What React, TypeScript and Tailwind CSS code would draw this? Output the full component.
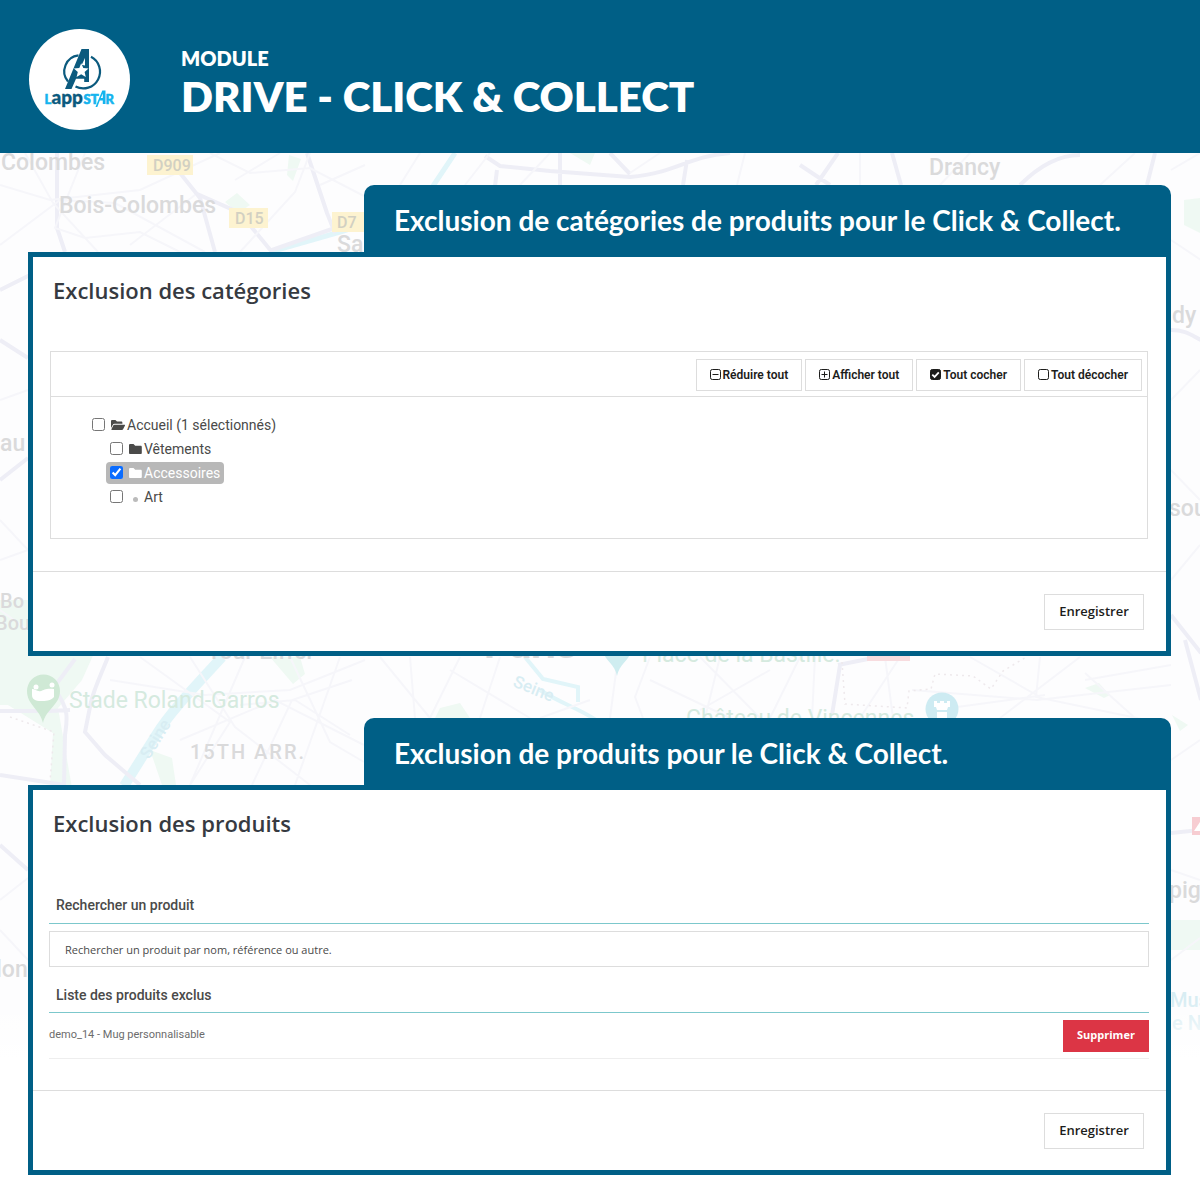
import type { ReactNode } from 'react';
import { useState } from 'react';

const toolbar = [
  { label: 'Réduire tout', icon: 'minus' },
  { label: 'Afficher tout', icon: 'plus' },
  { label: 'Tout cocher', icon: 'checked' },
  { label: 'Tout décocher', icon: 'empty' },
];

function BoxIcon({ kind }: { kind: string }) {
  return (
    <svg className="mb-0.5 size-[11px] shrink-0" viewBox="0 0 11 11" fill="none" stroke="#1d1d1b" aria-hidden="true">
      <rect x="0.5" y="0.5" width="10" height="10" rx="1.8" fill={kind === 'checked' ? '#1d1d1b' : 'none'} />
      {(kind === 'minus' || kind === 'plus') && <path d="M2.5 5.5h6" />}
      {kind === 'plus' && <path d="M5.5 2.5v6" />}
      {kind === 'checked' && <path d="M2.3 5.6l2.3 2.3 4.2-4.5" stroke="#fff" strokeWidth="1.8" />}
    </svg>
  );
}

function Folder() {
  return (
    <svg className="h-3 w-[13px] shrink-0" viewBox="0 0 13 12" fill="currentColor" aria-hidden="true">
      <path d="M0 2.2C0 1.5.6 1 1.2 1h3.3l1.7 1.7h5.4c.7 0 1.2.5 1.2 1.2v6c0 .6-.5 1.1-1.2 1.1H1.2C.6 11 0 10.5 0 9.9z" />
    </svg>
  );
}

function FolderOpen() {
  return (
    <svg className="h-3 w-[14px] shrink-0" viewBox="0 0 14 12" fill="currentColor" aria-hidden="true">
      <path d="M0 9V2.2C0 1.5.5 1 1.2 1h3.2L6 2.6h4.2c.7 0 1.2.5 1.2 1.2v1H3.6c-.8 0-1.5.4-1.9 1.1z" />
      <path d="M14 6.4l-1.9 3.9c-.2.4-.6.7-1.1.7H1c-.5 0-.7-.5-.5-.9l1.9-3.8c.2-.4.6-.6 1.1-.6h10c.5 0 .7.3.5.7z" />
    </svg>
  );
}

function Logo() {
  return (
    <svg className="size-[102px] shrink-0" viewBox="0 0 102 102" role="img" aria-label="Lappstar">
      <circle cx="51.5" cy="51.5" r="50.5" fill="#fff" />
      <g fill="none" stroke="#0b5a7e" strokeWidth="2.2">
        <path d="M50.5 27.4A16 16 0 0 0 40 53.5" />
        <path d="M63 28.8a16 16 0 1 1-15.5 29.7" />
      </g>
      <path d="M53.5 21H61v33h-4.8v-3.2H48L43.5 61H37z" fill="#0b5a7e" />
      <path d="M57 30v7.5l-2.6-.5-.6-.3z" fill="#fff" />
      <path d="M53.2 35.2l2.1 4.8 5.2.4-3.9 3.5 1.2 5.1-4.6-2.7-4.6 2.7 1.2-5.1-3.9-3.5 5.4-.4z" fill="#fff" />
      <g fontFamily="Lato, sans-serif" fontWeight="900">
        <text x="16.5" y="76" fontSize="13" fill="#14b4ee" stroke="#14b4ee" strokeWidth="0.5">L</text>
        <text x="23.5" y="76" fontSize="19" fill="#0b5a7e" stroke="#0b5a7e" strokeWidth="0.3">app</text>
        <text x="55.5" y="76" fontSize="13" fill="#14b4ee" stroke="#14b4ee" strokeWidth="0.7">ST</text>
        <text x="77.5" y="76" fontSize="13" fill="#14b4ee" stroke="#14b4ee" strokeWidth="0.5">R</text>
      </g>
      <path d="M67.5 79l6.8-16.5h3.2V76h-2.7v-3.5h-3L69.3 79zM72.8 70h2v-4.5z" fill="#14b4ee" />
    </svg>
  );
}

// Faded Paris street map behind the panels
function MapBackdrop() {
  return (
    <svg
      className="absolute inset-0 -z-10 size-full"
      viewBox="0 153 1200 1047"
      preserveAspectRatio="xMidYMin slice"
      fill="none"
      fontFamily="Roboto, sans-serif"
      aria-hidden="true"
    >
      <rect y="153" width="1200" height="1047" fill="#fdfdfe" />
      <g fill="#eff9f3">
        <path d="M0 600h100v40l-18 40-24 28 14 80H50l3-55-45-28H0z" />
        <path d="M270 657h30l5 17-12 10zM289 155l12 4-8 22-6-6zM225 202l12-9 13 12-12 8zM276 340l12-2-6 14zM1085 688l14-5 11 12-6 3zM150 750l22 8 4 27h-14zM1184 200l16-2v35l-16-8zM570 153h25l-5 12zM1172 715l16 10-8 6zM1170 920h30v30h-30zM440 708l20-5 10 15h-35z" />
      </g>
      <g stroke="#e1f5f9" strokeWidth="10">
        <path d="M222 657c-22 24-52 55-66 78l-32 51" />
        <path d="M270 252l70-20 25-8M455 153l-30 45" strokeWidth="5" />
        <path d="M525 657l18 22 35 8v15M540 690c18 12 38 18 56 30" strokeWidth="4" />
      </g>
      <g stroke="#eeeef6" strokeWidth="4">
        <path d="M57 153v75l8 24M180 173l20 25 15 54M195 193l45 20 32 39M307 153l20 60 8 20M272 250l60-21" />
        <path d="M0 711h50l20-1M55 690c15 20 12 30 10 45l-1 50M0 775l65 10M55 686l20-27M108 657c-8 20-14 32-17 45l-6 30 20 23 35 30" />
        <path d="M485 156l15 10 50 5 80 6c50-5 55-20 100-24M560 153v32M497 170l-2 16M610 153l20 21M800 165l30 20M838 153l-22 32M892 153l9 32M1020 185c20-20 40-30 60-30M1155 153l-8 32M687 160l-4 25" />
        <path d="M840 665l-8 50M838 665l50-10M1185 640l16 60M1171 615l30 38M1171 330c15 0 20 5 30 10M1171 833l30-3M0 290l30-15M0 340l28 18M0 480l28-22M0 845l28 25" />
      </g>
      <g stroke="#f6f6fa" strokeWidth="2">
        <path d="M0 185l50 15 90-10 80-37M0 245l60-45 55 3 90 49M25 153l28 50 45 49M85 153l-30 75 30 10 55-6 40 20M210 153l40 20 60-5 54 28M235 180l45-27M240 252l55-60 15-39M320 185l45-20M130 245l65-50" />
        <path d="M140 657l90 65-40 63M110 680l95 15 85-5 75-30M190 657l45 70 75 58M245 657l-55 128M290 657l40 85 34 20M180 740l95-40 89 45M340 657l-45 128M352 680l-60 20-40 85M240 705l55-5 55 35M0 610l28 20" />
        <path d="M380 657l50 61M410 657l5 61M460 657l-30 61M450 670l80 48M500 657l-20 61M610 718l8-61M590 700l-50 18M650 657l-15 40 8 21M650 680l80 38M700 657l60 61M720 657l-15 61M770 670l-70 40M800 657l-30 61M815 657l-3 61" />
        <path d="M900 657l-40 61M885 657l8 61M912 690l125 10 134-15M935 710l110-15M970 657l70 40M1040 657l-4 40 120 25M1085 680l86-15M1135 718l-50-45M1000 718l80-61" />
        <path d="M420 153l-20 32M465 185l25-32M520 185l30-32M660 153l-30 20M745 153l-8 32M860 153v32M940 185l30-32M1100 185l35-32M1171 170l29-17M1171 240l30 20M1171 400l29-30M1171 470l29 30M1171 580l29-35M1171 760l29-20M1171 870l29 10M1171 960l29-22M0 400l28-10M0 520l28 30M0 560l28-10M0 900l28-22M0 930l28 30" />
      </g>
      <path d="M10 717l44 15-4 50M842 662l3 42 62 4 2-17 22-2 4-15 38 2 18 13 12-18 25-15" stroke="#eee9ec" strokeWidth="1.5" strokeDasharray="2 4" />
      <g fill="#fdf3d0">
        <rect x="147" y="155" width="46" height="20" />
        <rect x="229" y="208" width="39" height="20" />
        <rect x="332" y="212" width="36" height="20" />
      </g>
      <g fill="#d2d0c2" fontSize="16" fontWeight="500">
        <text x="153" y="171">D909</text>
        <text x="235" y="224">D15</text>
        <text x="337" y="228">D7</text>
      </g>
      <g fill="#dadadb" fontSize="23" fontWeight="500">
        <text x="1" y="170">Colombes</text>
        <text x="59" y="213">Bois-Colombes</text>
        <text x="337" y="252">Sa</text>
        <text x="929" y="175">Drancy</text>
        <text x="1172" y="323">dy</text>
        <text x="1169" y="516">sou</text>
        <text x="0" y="451">au</text>
        <text x="0" y="608" fontSize="20">Bo</text>
        <text x="-5" y="630" fontSize="20">Bou</text>
        <text x="-4" y="977">lon</text>
        <text x="1169" y="898">pig</text>
        <text x="207" y="659">Tour Eiffel</text>
        <text x="484" y="658" fontSize="40" fontWeight="700">Paris</text>
        <text x="190" y="759" fontSize="20" letterSpacing="2">15TH ARR.</text>
      </g>
      <g fill="#d5eadf" fontSize="23">
        <text x="69" y="708">Stade Roland-Garros</text>
        <text x="642" y="662">Place de la Bastille.</text>
        <text x="686" y="726">Château de Vincennes</text>
      </g>
      <g fill="#d8edf3" fontSize="17" fontWeight="500">
        <text transform="translate(512 686) rotate(22)">Seine</text>
        <text transform="translate(149 760) rotate(-58)">Seine</text>
        <text x="1170" y="1007" fontSize="20">Mus</text>
        <text x="1172" y="1030" fontSize="20">e N</text>
      </g>
      <path d="M43 723c-3-14-16-18-16-32a16.5 16.5 0 0 1 33 0c0 14-14 18-17 32z" fill="#cfe9d5" />
      <path d="M32 689c3 0 5 3 9 2 3-1 5-3 13-2v8c-3 4-9 4-13 4-6 0-9-2-9-6z" fill="#fff" />
      <circle cx="36" cy="687" r="2.5" fill="#fff" />
      <circle cx="52" cy="685" r="2.5" fill="#fff" />
      <path d="M617 676c-2-12-12-15-14-25h28c-2 10-12 13-14 25z" fill="#cfedf0" />
      <circle cx="942" cy="709" r="16.5" fill="#cdebf2" />
      <path d="M934 701h3v2h3v-2h4v2h3v-2h3v6h-2l-1 3h-10l-1-3h-2zM937 712h10v8h-10z" fill="#fff" />
      <rect x="867" y="651" width="43" height="10" fill="#f8dcdf" />
      <path d="M1192 817h8v18h-8z" fill="#f7cdd2" />
      <path d="M1194 831l6-9v9z" fill="#fff" />
      <path d="M0 1000h1200v200H0z" fill="url(#fade)" />
      <defs>
        <linearGradient id="fade" x1="0" y1="0" x2="0" y2="1">
          <stop offset="0" stopColor="#fff" stopOpacity="0" />
          <stop offset="0.3" stopColor="#fff" />
        </linearGradient>
      </defs>
    </svg>
  );
}

function Panel({ tab, title, children }: { tab: string; title: string; children: ReactNode }) {
  return (
    <section>
      <h2 className="ml-[336px] h-[67px] rounded-t-[10px] bg-[#005f86] pt-[15px] pl-[30px] font-[Lato,sans-serif] text-[28px] leading-10 font-bold text-white">
        {tab}
      </h2>
      <div className="border-5 border-[#005f86] bg-white">
        <h3 className="px-5 pt-[15px] text-[22px] leading-9 font-semibold text-[#363a41]">{title}</h3>
        {children}
        <div className="flex justify-end border-t border-[#dddddd] px-[22px] pt-[22px] pb-[21px]">
          <button className="h-9 w-[100px] border border-[#dddddd] bg-white text-[13px] font-semibold text-[#1d1d1b]">
            Enregistrer
          </button>
        </div>
      </div>
    </section>
  );
}

function TreeItem({ label, icon, checked, onToggle }: { label: string; icon: ReactNode; checked: boolean; onToggle: () => void }) {
  return (
    <label
      className={`flex h-[22px] w-fit items-center rounded-[4px] px-1 text-sm ${checked ? 'bg-[#b8b8b8] text-white' : 'text-[#4a4a49]'}`}
    >
      <input type="checkbox" checked={checked} onChange={onToggle} className="mr-1.5 mb-0.5 size-[13px] accent-[#0a6cff]" />
      {icon}
      <span className="ml-0.5">{label}</span>
    </label>
  );
}

export default function App() {
  const [selected, setSelected] = useState<string[]>(['Accessoires']);
  const toggle = (name: string) =>
    setSelected((s) => (s.includes(name) ? s.filter((n) => n !== name) : [...s, name]));

  return (
    <div className="flex min-h-screen flex-col bg-white font-['Open_Sans',sans-serif]">
      <header className="flex h-[153px] items-start bg-[#005f86] px-7 pt-7 text-white">
        <Logo />
        <h1 className="ml-[51px] pt-[18px] font-[Lato,sans-serif] font-extrabold">
          <span className="block text-[20px] leading-6">MODULE</span>
          <span className="block text-[42px] leading-[52px]">DRIVE - CLICK &amp; COLLECT</span>
        </h1>
      </header>

      <main className="relative isolate flex grow flex-col gap-[62px] overflow-hidden pt-8 pr-[29px] pb-[25px] pl-7">
        <MapBackdrop />

        <Panel tab="Exclusion de catégories de produits pour le Click & Collect." title="Exclusion des catégories">
          <div className="mt-[43px] mr-[18px] mb-8 ml-[17px] border border-[#dddddd] font-[Roboto,sans-serif]">
            <div className="flex h-[45px] items-center justify-end gap-[3px] border-b border-[#dddddd] px-[5px] pt-0.5">
              {toolbar.map((b) => (
                <button
                  key={b.label}
                  className="flex h-8 items-center gap-0.5 border border-[#dddddd] bg-white px-[13px] text-xs font-semibold text-[#1d1d1b]"
                >
                  <BoxIcon kind={b.icon} />
                  {b.label}
                </button>
              ))}
            </div>
            <div className="flex flex-col gap-0.5 pt-[17px] pb-[30px] pl-[37px]">
              <TreeItem
                label={`Accueil (${selected.filter((n) => n !== 'Accueil').length} sélectionnés)`}
                icon={<FolderOpen />}
                checked={selected.includes('Accueil')}
                onToggle={() => toggle('Accueil')}
              />
              <div className="flex flex-col gap-0.5 pl-[18px]">
                <TreeItem label="Vêtements" icon={<Folder />} checked={selected.includes('Vêtements')} onToggle={() => toggle('Vêtements')} />
                <TreeItem label="Accessoires" icon={<Folder />} checked={selected.includes('Accessoires')} onToggle={() => toggle('Accessoires')} />
                <TreeItem
                  label="Art"
                  icon={<span className="mx-1 mt-1 size-[5px] rounded-full bg-[#bbbbbb]" />}
                  checked={selected.includes('Art')}
                  onToggle={() => toggle('Art')}
                />
              </div>
            </div>
          </div>
        </Panel>

        <Panel tab="Exclusion de produits pour le Click & Collect." title="Exclusion des produits">
          <div className="mt-[46px] mr-[17px] mb-[31px] ml-4">
            <label
              htmlFor="product-search"
              className="block border-b border-[#7cc8cc] px-[7px] py-2 font-[Roboto,sans-serif] text-sm leading-5 font-medium text-[#4a4a49]"
            >
              Rechercher un produit
            </label>
            <input
              id="product-search"
              type="text"
              placeholder="Rechercher un produit par nom, référence ou autre."
              className="mt-[7px] block h-9 w-full border border-[#dddddd] bg-white px-[15px] text-[11px] placeholder:text-[#4a4a49]"
            />
            <h4 className="mt-[10px] border-b border-[#7cc8cc] px-[7px] pt-2 pb-[7px] font-[Roboto,sans-serif] text-sm leading-5 font-medium text-[#4a4a49]">
              Liste des produits exclus
            </h4>
            <div className="flex h-[46px] items-center justify-between border-b border-[#eeeeee] font-[Roboto,sans-serif] text-[11px] text-[#6c6c6c]">
              demo_14 - Mug personnalisable
              <button className="h-8 w-[86px] bg-[#dc3545] font-['Open_Sans',sans-serif] text-[11px] font-bold text-white">
                Supprimer
              </button>
            </div>
          </div>
        </Panel>
      </main>
    </div>
  );
}
